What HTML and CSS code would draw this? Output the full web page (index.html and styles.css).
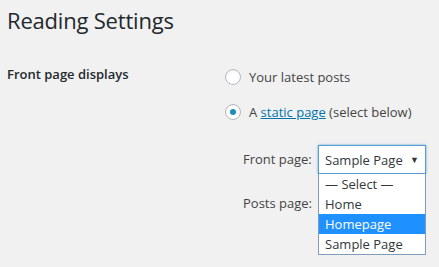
FILE: index.html
```html
<!DOCTYPE html>
<html>
<head>
<meta charset="utf-8">
<link rel="stylesheet" href="styles.css">
</head>
<body>
<div class="wrap">
  <h1 class="title">Reading Settings</h1>
  <div class="row">
    <div class="label">Front page displays</div>
    <div class="field">
      <label class="choice"><span class="radio"></span><span>Your latest posts</span></label>
      <label class="choice"><span class="radio checked"></span><span>A <a href="#" class="link">static page</a> (select below)</span></label>
      <div class="sub">
        <div class="subrow">
          <span class="sublabel">Front page:</span>
          <div class="selectwrap">
            <div class="select"><span>Sample Page</span><span class="arrow">▼</span></div>
            <ul class="list">
              <li>— Select —</li>
              <li>Home</li>
              <li class="hl">Homepage</li>
              <li>Sample Page</li>
            </ul>
          </div>
        </div>
        <div class="subrow">
          <span class="sublabel">Posts page:</span>
        </div>
      </div>
    </div>
  </div>
</div>
</body>
</html>
```
FILE: styles.css
```css
html, body {
  margin: 0;
  padding: 0;
  background: #f1f1f1;
}
body {
  font-family: "Open Sans", "Noto Sans", sans-serif;
  font-size: 13px;
  color: #23282d;
  width: 439px;
  height: 267px;
  overflow: hidden;
}
.wrap {
  padding: 0 0 0 7px;
}
.title {
  margin: 0;
  padding-top: 5px;
  font-size: 22px;
  font-weight: 400;
  line-height: 30px;
  color: #23282d;
  letter-spacing: -0.2px;
}
.row {
  display: grid;
  grid-template-columns: 218px 1fr;
  margin-top: 30px;
}
.label {
  font-weight: 600;
  font-size: 13px;
  line-height: 18px;
}
.field {
  display: flex;
  flex-direction: column;
}
.choice {
  display: flex;
  align-items: center;
  gap: 8px;
  height: 20px;
  margin-top: 2px;
  margin-bottom: 13px;
  color: #444;
  font-size: 13px;
}
.radio {
  box-sizing: border-box;
  width: 16px;
  height: 16px;
  border-radius: 50%;
  border: 1px solid #b4b9be;
  background: #fff;
  box-shadow: inset 0 1px 2px rgba(0,0,0,.07);
  display: flex;
  align-items: center;
  justify-content: center;
}
.radio.checked::after {
  content: "";
  width: 6px;
  height: 6px;
  border-radius: 50%;
  background: #1e8cbe;
}
.link {
  color: #0073aa;
  text-decoration: underline;
}
.sub {
  display: flex;
  flex-direction: column;
  padding-left: 18px;
  margin-top: 10px;
}
.subrow {
  display: flex;
  align-items: flex-start;
  gap: 5px;
  color: #444;
}
.sublabel {
  line-height: 29px;
  width: 70px;
}
.subrow + .subrow {
  margin-top: -66px;
}
.selectwrap {
  width: 108px;
  position: relative;
  z-index: 1;
}
.select {
  box-sizing: border-box;
  height: 29px;
  border: 1px solid #5b9dd9;
  box-shadow: 0 0 2px rgba(30,140,190,.8);
  background: #fff;
  display: flex;
  align-items: center;
  justify-content: space-between;
  padding: 0 6px 0 6px;
  color: #32373c;
}
.arrow {
  font-size: 9px;
  color: #32373c;
}
.list {
  list-style: none;
  margin: 0;
  padding: 0;
  box-sizing: border-box;
  border: 1px solid #7f9db9;
  border-top: none;
  background: #fff;
  color: #32373c;
}
.list li {
  height: 20px;
  line-height: 20px;
  padding-left: 6px;
}
.list li.hl {
  background: #1e90ff;
  color: #fff;
}
```
